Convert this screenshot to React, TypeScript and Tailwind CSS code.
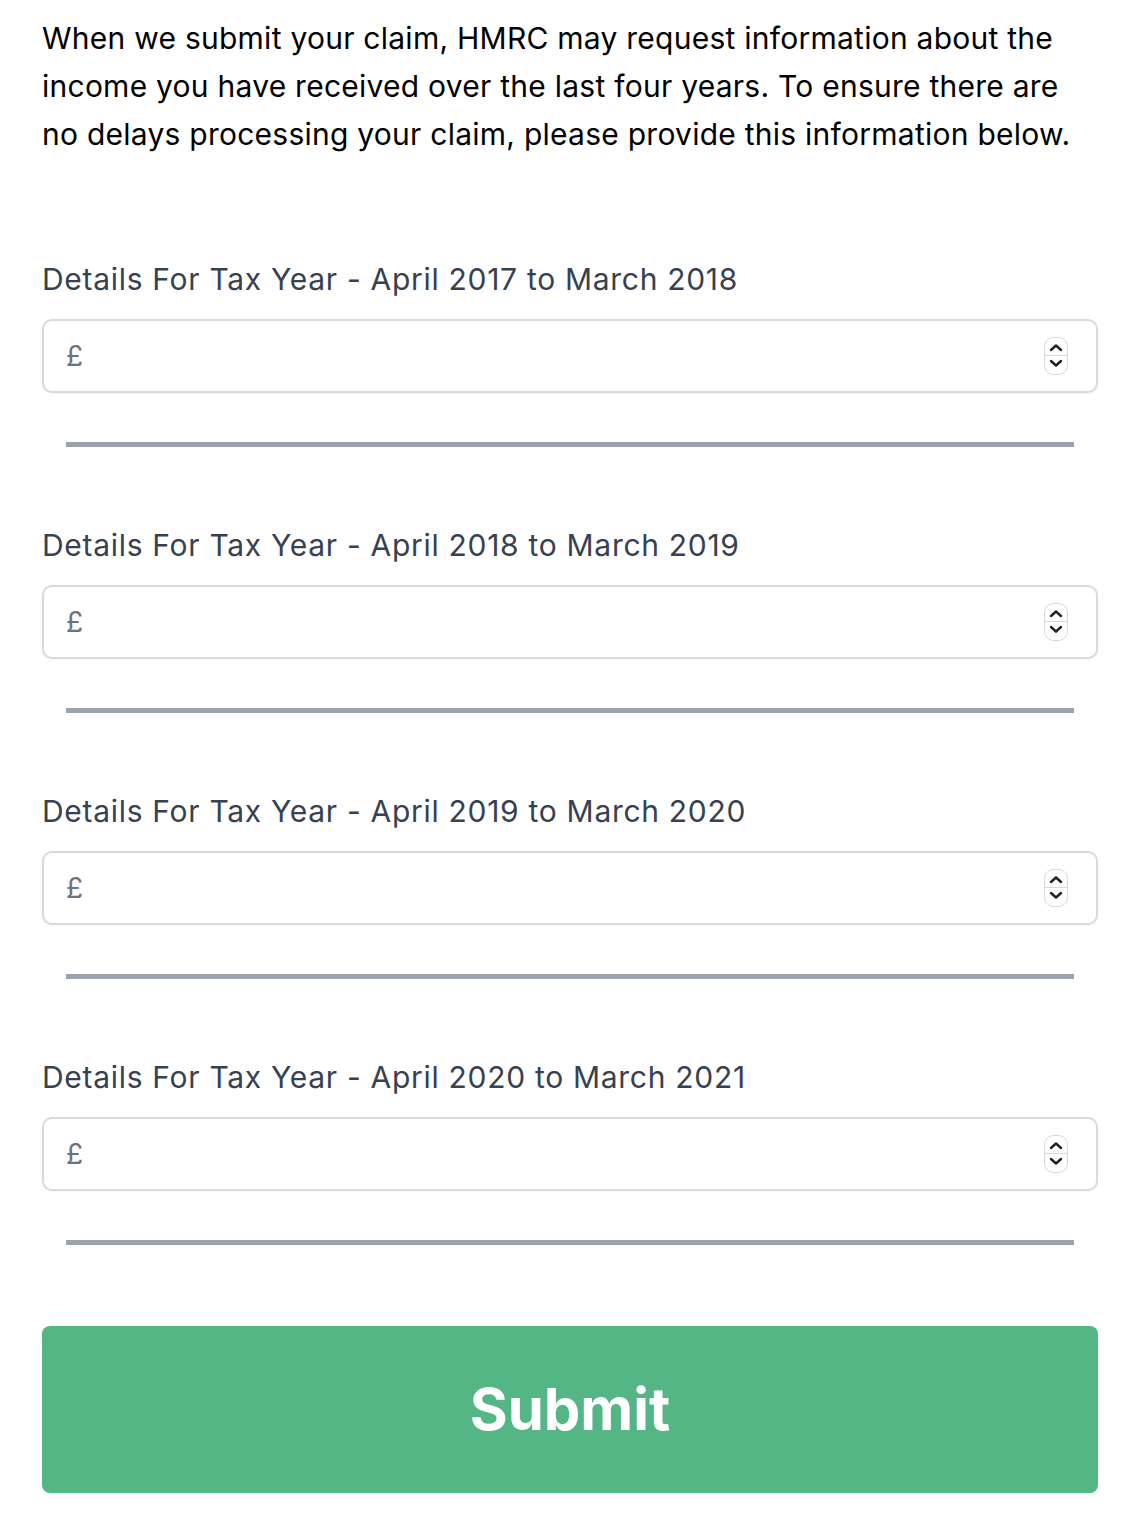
import React from "react";

const years = [
  "April 2017 to March 2018",
  "April 2018 to March 2019",
  "April 2019 to March 2020",
  "April 2020 to March 2021",
];

function Spinner() {
  return (
    <svg width="24" height="38" viewBox="0 0 24 38" fill="none">
      <rect x="0.5" y="0.5" width="23" height="37" rx="9" fill="#fff" stroke="#d8d8dc" />
      <line x1="1" y1="18.5" x2="23" y2="18.5" stroke="#d8d8dc" />
      <path d="M7 13 L12 8.5 L17 13" stroke="#222" strokeWidth="2.4" strokeLinecap="round" strokeLinejoin="round" />
      <path d="M7 24 L12 28.5 L17 24" stroke="#222" strokeWidth="2.4" strokeLinecap="round" strokeLinejoin="round" />
    </svg>
  );
}

function YearField({ label }: { label: string }) {
  return (
    <div>
      <label className="block text-[30px] leading-[40px] tracking-[0.7px] text-[#374151]">
        Details For Tax Year - {label}
      </label>
      <div className="relative mt-5 h-[74px] rounded-[10px] border-2 border-[#d9dadf] bg-white flex items-center shadow-[0_1px_2px_rgba(0,0,0,0.04)]">
        <span className="pl-[22px] text-[28px] text-[#6b7280]">£</span>
        <input type="text" className="flex-1 h-full bg-transparent outline-none text-[28px] px-3" />
        <div className="absolute right-[28px] top-[16px]">
          <Spinner />
        </div>
      </div>
      <div className="mx-6 mt-[49px] h-[5px] bg-[#9ca3af]" />
    </div>
  );
}

export default function App() {
  return (
    <div className="w-[1126px] min-h-[1518px] bg-white pl-[42px] pr-[28px] pt-[14px]" style={{ fontFamily: "Inter, 'Noto Sans', sans-serif" }}>
      <p className="text-[30px] leading-[48px] text-black tracking-[0.25px]">
        When we submit your claim, HMRC may request information about the income you have received over the last four years. To ensure there are no delays processing your claim, please provide this information below.
      </p>
      <div className="mt-[101px] flex flex-col gap-[78px]">
        {years.map((y) => (
          <YearField key={y} label={y} />
        ))}
      </div>
      <button className="mt-[81px] w-full h-[167px] rounded-[8px] bg-[#55b685] text-white text-[58px] font-bold">
        Submit
      </button>
    </div>
  );
}
